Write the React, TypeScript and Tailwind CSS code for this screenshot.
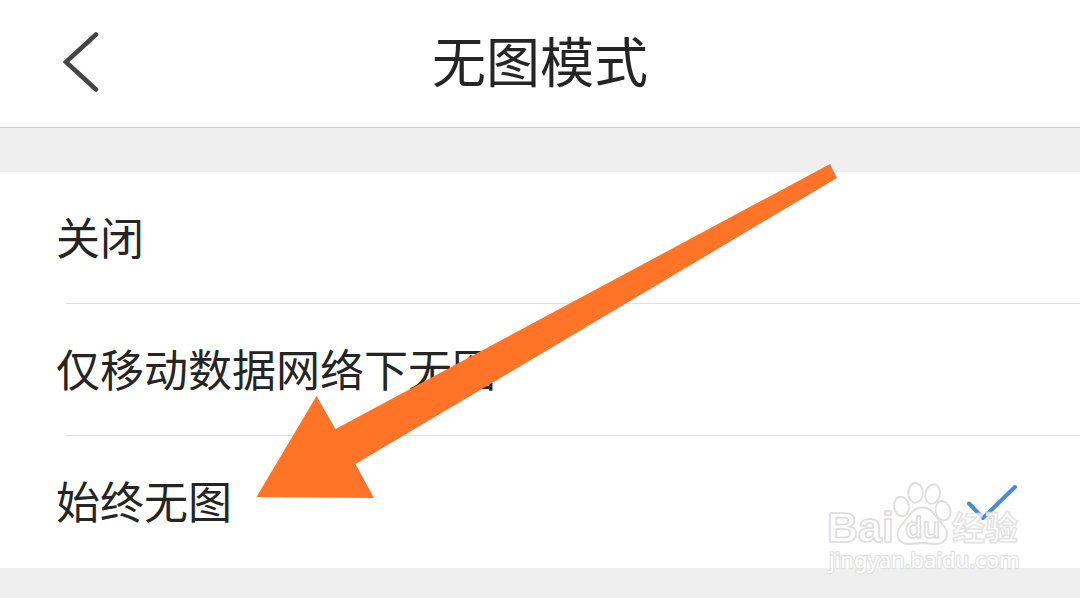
import { useState } from "react";

const options = ["关闭", "仅移动数据网络下无图", "始终无图"];

function BackIcon() {
  return (
    <svg className="h-16 w-10" viewBox="0 0 40 64" fill="none" aria-hidden="true">
      <path d="M36 4.5 6 32 36 59.5" stroke="#444444" strokeWidth="4.6" strokeLinecap="round" strokeLinejoin="miter" />
    </svg>
  );
}

function CheckIcon() {
  return (
    <svg className="hidden h-10 w-14 peer-checked:block" viewBox="0 0 56 40" fill="none" aria-hidden="true">
      <path d="M5 21.5 19 36 51 5" stroke="#4a8ade" strokeWidth="4" strokeLinecap="round" strokeLinejoin="round" />
    </svg>
  );
}

function Arrow() {
  return (
    <svg
      className="pointer-events-none absolute top-[164px] left-[256px] h-[336px] w-[584px]"
      viewBox="256 164 584 336"
      aria-hidden="true"
    >
      <polygon points="256.5,497 316.5,396 335.5,429 830,164 837,178 355.5,464 374,498" fill="#ff7427" />
    </svg>
  );
}

function Watermark() {
  return (
    <svg
      className="pointer-events-none absolute top-[480px] right-[52px] h-[100px] w-[208px]"
      viewBox="820 480 208 100"
      role="img"
      aria-label="Baidu 经验"
    >
      <g fill="#ffffff" fillOpacity="0.6" stroke="#dedede" strokeWidth="1.8" strokeLinejoin="round">
        <ellipse cx="901.5" cy="506.5" rx="7.3" ry="9.8" transform="rotate(-10 901.5 506.5)" />
        <ellipse cx="915.5" cy="492.8" rx="7.3" ry="9.8" />
        <ellipse cx="932.7" cy="494" rx="7.3" ry="9.8" transform="rotate(14 932.7 494)" />
        <ellipse cx="943" cy="510.7" rx="7.3" ry="9.8" transform="rotate(-14 943 510.7)" />
        <path d="M922 507.500c-7 0-10.500 4-13.500 9-4 6-11 10-11 17.500 0 6 4.500 10 10.500 10 5 0 9-1 14-1s9 1 14 1c6.500 0 11-4 11-10.500 0-7-7-11-11-17-3-5-7-9-14-9Z" />
      </g>
      <g fill="#ffffff" fillOpacity="0.8" stroke="#dcdcdc" strokeWidth="1.6" strokeLinejoin="round">
        <text x="827" y="542" className="font-['Liberation_Sans',sans-serif] text-[43px] font-bold">Bai</text>
        <text x="905" y="538" className="font-['Noto_Sans',sans-serif] text-[28px] font-semibold">du</text>
        <text x="952" y="540" className="font-['Noto_Sans_CJK_SC',sans-serif] text-[33px] font-bold" strokeOpacity="0.8">经验</text>
      </g>
      <text
        x="829"
        y="568"
        className="font-['Noto_Sans',sans-serif] text-[22px]"
        fill="#ffffff"
        stroke="#e2e2e2"
        strokeWidth="2.6"
        strokeLinejoin="round"
        paintOrder="stroke"
      >
        jingyan.baidu.com
      </text>
    </svg>
  );
}

export default function App() {
  const [selected, setSelected] = useState(2);

  return (
    <div className="relative flex min-h-screen flex-col overflow-hidden bg-[#efefef] font-['Noto_Sans_CJK_SC',sans-serif] text-[#252525]">
      <header className="grid h-32 grid-cols-[1fr_auto_1fr] items-center border-b border-[#d2d2d2] bg-white px-[60px] pb-1">
        <button type="button" aria-label="返回" className="justify-self-start">
          <BackIcon />
        </button>
        <h1 className="pb-1 text-[54px] leading-none">无图模式</h1>
      </header>

      <div role="radiogroup" aria-label="无图模式" className="mt-11 bg-white pb-px">
        {options.map((option, index) => (
          <div key={option}>
            {index > 0 && <hr className="ml-[66px] border-[#dfdfdf]" />}
            <label className="flex h-[131px] cursor-pointer items-center justify-between pr-[60px] pl-14">
              <span className="pb-1 text-[44px] leading-none">{option}</span>
              <input
                type="radio"
                name="image-mode"
                className="peer ml-auto size-0 appearance-none"
                checked={selected === index}
                onChange={() => setSelected(index)}
              />
              <CheckIcon />
            </label>
          </div>
        ))}
      </div>

      <Arrow />
      <Watermark />
    </div>
  );
}
